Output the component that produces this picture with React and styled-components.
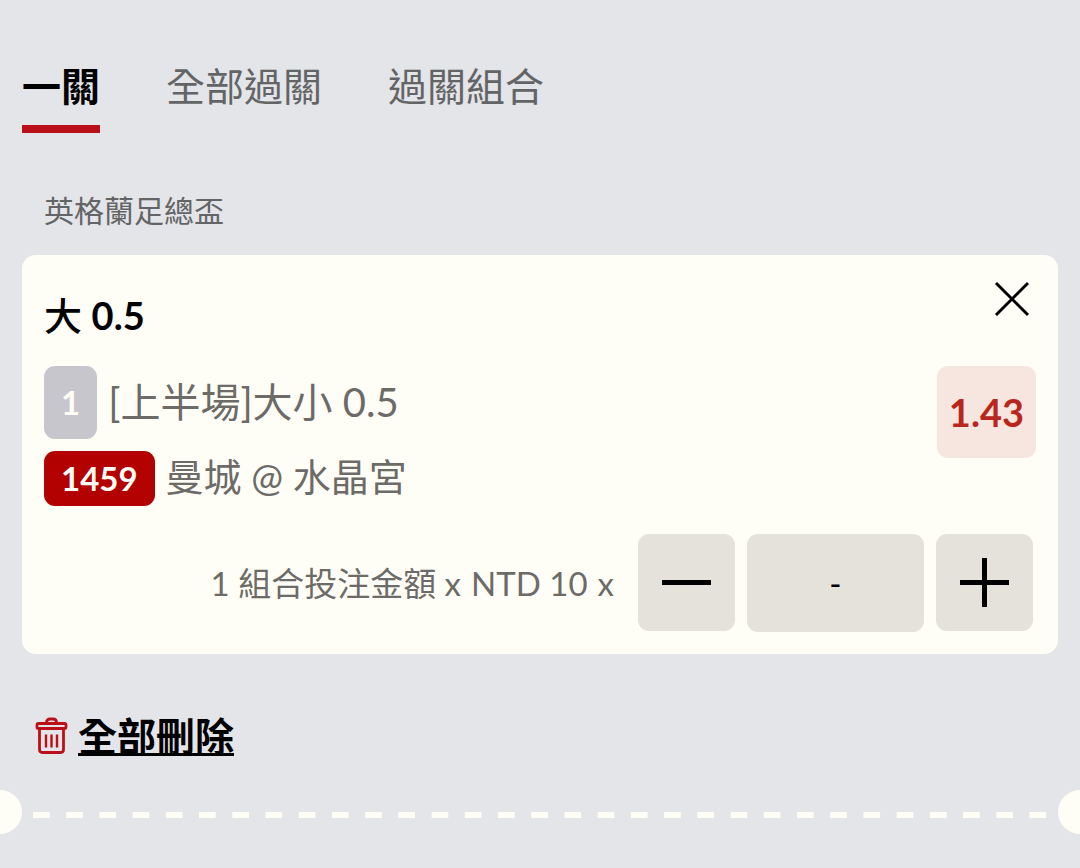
import React, { useState } from "react"
import styled, { createGlobalStyle } from "styled-components"

const GlobalStyle = createGlobalStyle`
  * {
    box-sizing: border-box;
  }
  body {
    margin: 0;
    background: #e4e5e8;
    color: #000;
    font-family: Lato, "Noto Sans CJK TC", sans-serif;
    font-size: 39px;
    overflow-x: hidden;
  }
  button,
  input {
    font: inherit;
    color: inherit;
    border: 0;
    padding: 0;
    background: none;
  }
  button {
    cursor: pointer;
  }
`

const Page = styled.main`
  padding-top: 48px;
`

const Tabs = styled.nav`
  display: flex;
  gap: 66px;
  padding: 0 22px;
`

const Tab = styled.button`
  height: 85px;
  line-height: 77px;
  border-bottom: 8px solid ${({ $active }) => ($active ? "#bb1017" : "transparent")};
  color: ${({ $active }) => ($active ? "#000" : "#636466")};
  font-weight: ${({ $active }) => ($active ? 700 : 400)};
`

const League = styled.h2`
  margin: 55px 44px 23px;
  font-size: 30px;
  font-weight: 400;
  line-height: 44px;
  color: #636466;
`

const Card = styled.section`
  margin: 0 22px;
  padding: 22px;
  border-radius: 14px;
  background: #fffef6;
`

const CardHead = styled.header`
  display: flex;
  justify-content: space-between;
  align-items: flex-start;
  height: 89px;
`

const Pick = styled.h3`
  margin: 0;
  font-size: 38px;
  font-weight: 500;
  line-height: 77px;
`

const CloseButton = styled.button`
  display: flex;
  padding: 3px 5px;
`

const CardBody = styled.div`
  display: flex;
  justify-content: space-between;
  align-items: flex-start;
`

const Lines = styled.div`
  display: grid;
  gap: 12px;
`

const Line = styled.div`
  display: flex;
  align-items: center;
  gap: 11px;
  color: #6c6b67;
  font-size: 40px;
  line-height: 55px;
`

const Teams = styled.span`
  align-self: flex-start;
  font-size: 38px;
  line-height: 50px;
`

const Badge = styled.span`
  padding: ${({ $tall }) => ($tall ? "9px 17px" : "0 17px")};
  border-radius: 11px;
  background: ${({ $tall }) => ($tall ? "#c7c6cd" : "#b30000")};
  color: #fffef6;
  font-size: 33px;
  font-weight: 700;
`

const Odds = styled.strong`
  padding: 0 12px;
  border-radius: 11px;
  background: #f7e6df;
  color: #b8261d;
  font-size: 38px;
  font-weight: 700;
  line-height: 92px;
`

const Stake = styled.div`
  display: flex;
  justify-content: flex-end;
  align-items: flex-start;
  gap: 12px;
  margin-top: 28px;
  padding-right: 3px;
`

const StakeLabel = styled.label`
  display: flex;
  align-items: center;
  gap: 10px;
  margin-right: 12px;
  color: #6c6b67;
  font-size: 33px;
  line-height: 98px;
`

const StepButton = styled.button`
  display: flex;
  align-items: center;
  justify-content: center;
  width: 97px;
  height: 97px;
  border-radius: 11px;
  background: #e5e2dc;
`

const Amount = styled.input`
  width: 177px;
  height: 98px;
  border-radius: 11px;
  background: #e5e2dc;
  font-size: 33px;
  text-align: center;
`

const ClearAll = styled.button`
  display: flex;
  align-items: center;
  gap: 10px;
  margin: 52px 34px 24px;
  font-weight: 700;
  line-height: 60px;

  span {
    text-decoration: underline;
    text-decoration-thickness: 3px;
    text-decoration-skip-ink: none;
    text-underline-offset: 2px;
  }
`

const Divider = styled.div`
  display: flex;
  align-items: center;
`

const Notch = styled.i`
  width: 22px;
  height: 44px;
  border-radius: ${({ $right }) => ($right ? "22px 0 0 22px" : "0 22px 22px 0")};
  background: #fffef6;
`

const Dashes = styled.i`
  flex: 1;
  height: 6px;
  margin: 5px -5px 0 11px;
  background: linear-gradient(90deg, #fffef6 50%, transparent 50%) 0 0 / 33px 6px;
  background-repeat: round no-repeat;
`

const CloseIcon = () => (
  <svg width="38" height="38" viewBox="0 0 38 38" stroke="#000" strokeWidth="3">
    <path d="M3 3 35 35M35 3 3 35" />
  </svg>
)

const StepIcon = ({ plus }) => (
  <svg width="49" height="49" viewBox="0 0 49 49" stroke="#000" strokeWidth="5">
    <path d={plus ? "M0 24.500H49M24.500 0V49" : "M0 24.500H49"} />
  </svg>
)

const TrashIcon = () => (
  <svg
    width="34"
    height="38"
    viewBox="0 0 34 38"
    fill="none"
    stroke="#bb1017"
    strokeWidth="2.8"
    strokeLinejoin="round"
  >
    <rect x="3" y="6.500" width="29" height="5" rx="1.5" />
    <path d="M12.500 6.500V5.500Q12.500 2 16 2H19Q22.500 2 22.500 5.500V6.500" />
    <path d="M5.500 11.500V32.500Q5.500 35.500 8.500 35.500H26.500Q29.500 35.500 29.500 32.500V11.500" />
    <path d="M12 17.500V30.500M17.500 17.500V30.500M23 17.500V30.500" strokeWidth="2.4" />
  </svg>
)

const tabs = ["一關", "全部過關", "過關組合"]

const App = () => {
  const [active, setActive] = useState(0)
  const [units, setUnits] = useState(0)

  return (
    <Page>
      <GlobalStyle />
      <Tabs>
        {tabs.map((name, i) => (
          <Tab key={name} $active={i === active} onClick={() => setActive(i)}>
            {name}
          </Tab>
        ))}
      </Tabs>

      <League>英格蘭足總盃</League>
      <Card>
        <CardHead>
          <Pick>
            大 <b>0.5</b>
          </Pick>
          <CloseButton aria-label="關閉">
            <CloseIcon />
          </CloseButton>
        </CardHead>
        <CardBody>
          <Lines>
            <Line>
              <Badge $tall>1</Badge>
              <span>[上半場]大小 0.5</span>
            </Line>
            <Line>
              <Badge>1459</Badge>
              <Teams>曼城 @ 水晶宮</Teams>
            </Line>
          </Lines>
          <Odds>1.43</Odds>
        </CardBody>
        <Stake>
          <StakeLabel htmlFor="amount">
            <span>1 組合投注金額 x</span>
            <span>NTD 10</span>
            <span>x</span>
          </StakeLabel>
          <StepButton aria-label="減少" onClick={() => setUnits(Math.max(0, units - 1))}>
            <StepIcon />
          </StepButton>
          <Amount
            id="amount"
            value={units || "-"}
            onChange={e => setUnits(parseInt(e.target.value, 10) || 0)}
          />
          <StepButton aria-label="增加" onClick={() => setUnits(units + 1)}>
            <StepIcon plus />
          </StepButton>
        </Stake>
      </Card>

      <ClearAll>
        <TrashIcon />
        <span>全部刪除</span>
      </ClearAll>

      <Divider>
        <Notch />
        <Dashes />
        <Notch $right />
      </Divider>
    </Page>
  )
}

export default App
